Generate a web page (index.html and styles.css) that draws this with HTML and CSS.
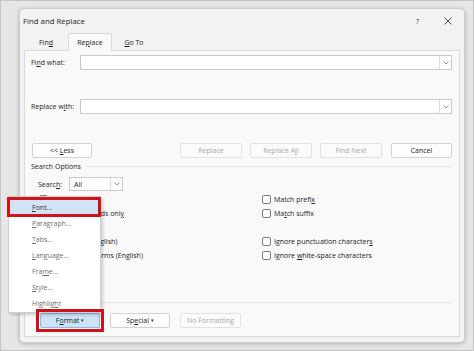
FILE: index.html
```html
<!DOCTYPE html>
<html>
<head>
<meta charset="utf-8">
<title>Find and Replace</title>
<link rel="stylesheet" href="styles.css">
</head>
<body>
<div class="dialog">
  <div class="titlebar">
    <span class="title">Find and Replace</span>
    <span class="help">?</span>
    <svg class="close" width="8" height="8" viewBox="0 0 8 8"><path d="M0.5 0.5L7.5 7.5M7.5 0.5L0.5 7.5" stroke="#333" stroke-width="0.9" fill="none"/></svg>
  </div>
  <div class="tabs">
    <div class="tab">Fin<u>d</u></div>
    <div class="tab active">Re<u>p</u>lace</div>
    <div class="tab"><u>G</u>o To</div>
  </div>
  <div class="panel">
    <div class="field field-find">
      <span class="label">Fi<u>n</u>d what:</span>
      <div class="combo"><span class="arrow"><svg width="6" height="4" viewBox="0 0 6 4"><path d="M0.5 0.5L3 3L5.5 0.5" stroke="#777" stroke-width="0.8" fill="none"/></svg></span></div>
    </div>
    <div class="field field-replace">
      <span class="label">Replace w<u>i</u>th:</span>
      <div class="combo"><span class="arrow"><svg width="6" height="4" viewBox="0 0 6 4"><path d="M0.5 0.5L3 3L5.5 0.5" stroke="#777" stroke-width="0.8" fill="none"/></svg></span></div>
    </div>
    <div class="buttons">
      <div class="btn btn-less">&lt;&lt; <u>L</u>ess</div>
      <div class="btn disabled first-right">Replace</div>
      <div class="btn disabled">Replace A<u>l</u>l</div>
      <div class="btn disabled">Find Next</div>
      <div class="btn btn-cancel">Cancel</div>
    </div>
    <div class="section">Search Options</div>
    <div class="search-row">
      <span class="search-label">Searc<u>h</u>:</span>
      <div class="select">All<span class="arrow"><svg width="6" height="4" viewBox="0 0 6 4"><path d="M0.5 0.5L3 3L5.5 0.5" stroke="#777" stroke-width="0.8" fill="none"/></svg></span></div>
    </div>
    <div class="options">
      <div class="opt"><span class="box"></span><span>Matc<u>h</u> case</span></div>
      <div class="opt"><span class="box"></span><span>Match prefi<u>x</u></span></div>
      <div class="opt"><span class="box"></span><span>Find whole words onl<u>y</u></span></div>
      <div class="opt"><span class="box"></span><span>Ma<u>t</u>ch suffix</span></div>
      <div class="opt"><span class="box"></span><span>Use wildcards</span></div>
      <div class="opt"></div>
      <div class="opt"><span class="box"></span><span>Sounds li<u>k</u>e (English)</span></div>
      <div class="opt"><span class="box"></span><span>Ignore punctuation character<u>s</u></span></div>
      <div class="opt"><span class="box"></span><span>Find all <u>w</u>ord forms (English)</span></div>
      <div class="opt"><span class="box"></span><span>Ignore <u>w</u>hite-space characters</span></div>
    </div>
    <div class="divider"></div>
    <div class="bottom-buttons">
      <div class="btn btn-format">F<u>o</u>rmat <span class="caret">&#9662;</span></div>
      <div class="btn">Sp<u>e</u>cial <span class="caret">&#9662;</span></div>
      <div class="btn disabled btn-wide">No Formatting</div>
    </div>
  </div>
</div>

<div class="menu">
  <div class="item item-active"><u>F</u>ont...</div>
  <div class="item"><u>P</u>aragraph...</div>
  <div class="item"><u>T</u>abs...</div>
  <div class="item"><u>L</u>anguage...</div>
  <div class="item">Fra<u>m</u>e...</div>
  <div class="item"><u>S</u>tyle...</div>
  <div class="item">Highlig<u>h</u>t</div>
</div>
<div class="mark mark-font"></div>
<div class="mark mark-format"></div>
</body>
</html>
```
FILE: styles.css
```css
* { box-sizing: border-box; }
html, body { margin: 0; }
body {
  width: 474px;
  height: 351px;
  overflow: hidden;
  position: relative;
  background: #e6e6e6;
  border: 1px solid #c4c4c4;
  padding: 7px 0 0 18px;
  font-family: "Open Sans", "Noto Sans", sans-serif;
  font-size: 7px;
  color: #222;
}
u { text-decoration: underline; text-underline-offset: 1px; }

.dialog {
  width: 446px;
  height: 335px;
  background: #f2f2f2;
  border: 1px solid #cbcbcb;
  border-radius: 5px;
  box-shadow: 0 1px 4px rgba(0,0,0,0.22);
  display: flex;
  flex-direction: column;
  padding-bottom: 5px;
}

.titlebar {
  height: 24px;
  display: flex;
  align-items: center;
  padding: 0 12px 0 3px;
}
.title { font-size: 7.8px; color: #1e1e1e; flex: 1; }
.help { font-size: 7px; color: #333; margin-right: 25px; }
.close { display: block; }

.tabs {
  height: 17px;
  margin: 0 4px;
  display: flex;
  align-items: flex-start;
}
.tab {
  width: 44px;
  height: 17px;
  text-align: center;
  padding-top: 4px;
  line-height: 12px;
  color: #222;
}
.tab.active {
  height: 18px;
  background: #f9f9f9;
  border: 1px solid #d8d8d8;
  border-bottom: none;
  border-radius: 2px 2px 0 0;
  padding-top: 3px;
  position: relative;
  z-index: 2;
}

.panel {
  flex: 1;
  margin: 0 4px;
  background: #f9f9f9;
  border: 1px solid #dadada;
  padding: 0 7px 0 6px;
  display: flex;
  flex-direction: column;
}

.field { display: flex; align-items: center; height: 15px; }
.field-find { margin-top: 4px; }
.field-replace { margin-top: 29px; }
.label { width: 49px; }
.combo {
  flex: 1;
  height: 15px;
  background: #fff;
  border: 1px solid #cacaca;
  display: flex;
  justify-content: flex-end;
}
.arrow {
  width: 12px;
  height: 100%;
  border-left: 1px solid #dedede;
  display: flex;
  align-items: center;
  justify-content: center;
}
.arrow svg { display: block; }

.buttons {
  margin-top: 29px;
  display: flex;
  gap: 8px;
}
.btn {
  height: 15px;
  width: 62px;
  background: #fdfdfd;
  border: 1px solid #d2d2d2;
  border-radius: 2px;
  text-align: center;
  line-height: 13px;
  color: #222;
  white-space: nowrap;
}
.btn.disabled { color: #a8a8a8; border-color: #e2e2e2; background: #fbfbfb; }
.btn-less { width: 60px; margin-left: 1px; }
.first-right { margin-left: auto; }
.btn-cancel { width: 61px; margin-left: 1px; }

.section {
  margin-top: 3px;
  height: 11px;
  line-height: 11px;
  display: flex;
  align-items: center;
  gap: 4px;
}
.section::after {
  content: "";
  flex: 1;
  height: 1px;
  background: #e6e6e6;
}

.search-row {
  margin-top: 5px;
  height: 14px;
  display: flex;
  align-items: center;
  padding-left: 7px;
}
.search-label { width: 31px; }
.select {
  width: 54px;
  height: 14px;
  background: #fff;
  border: 1px solid #cacaca;
  display: flex;
  align-items: center;
  padding-left: 4px;
  justify-content: space-between;
}

.options {
  margin-top: 1px;
  display: grid;
  grid-template-columns: 231px 1fr;
  grid-auto-rows: 14px;
}
.opt {
  display: flex;
  align-items: center;
  white-space: nowrap;
}
.options .opt:nth-child(odd) { padding-left: 8px; }
.box {
  width: 9px;
  height: 9px;
  border: 1px solid #7c7c7c;
  border-radius: 2px;
  background: #fff;
  margin-right: 3px;
  flex-shrink: 0;
}

.divider {
  margin-top: 40px;
  height: 1px;
  background: #e6e6e6;
}

.bottom-buttons {
  margin-top: 10px;
  display: flex;
  gap: 10px;
  padding-left: 9px;
}
.bottom-buttons .btn { width: 60px; }
.bottom-buttons .btn-wide { width: 61px; }
.caret { font-size: 5px; position: relative; top: -1px; }
.btn-format { background: #cce4f7; border-color: #8bb8e4; }

.menu {
  position: absolute;
  left: 7px;
  top: 195px;
  width: 93px;
  height: 117px;
  background: #fff;
  border: 1px solid #cfcfcf;
  box-shadow: 2px 2px 3px rgba(0,0,0,0.18);
  padding: 3px 1px 0 1px;
  z-index: 5;
}
.item {
  height: 16px;
  line-height: 16px;
  padding-left: 22px;
  color: #6f6f6f;
}
.item-active { background: #d3e3f6; color: #333; }

.mark {
  position: absolute;
  border: 3px solid #d0121b;
  z-index: 6;
}
.mark-font { left: 6px; top: 196px; width: 94px; height: 20px; }
.mark-format { left: 35px; top: 308px; width: 68px; height: 23px; }
```
